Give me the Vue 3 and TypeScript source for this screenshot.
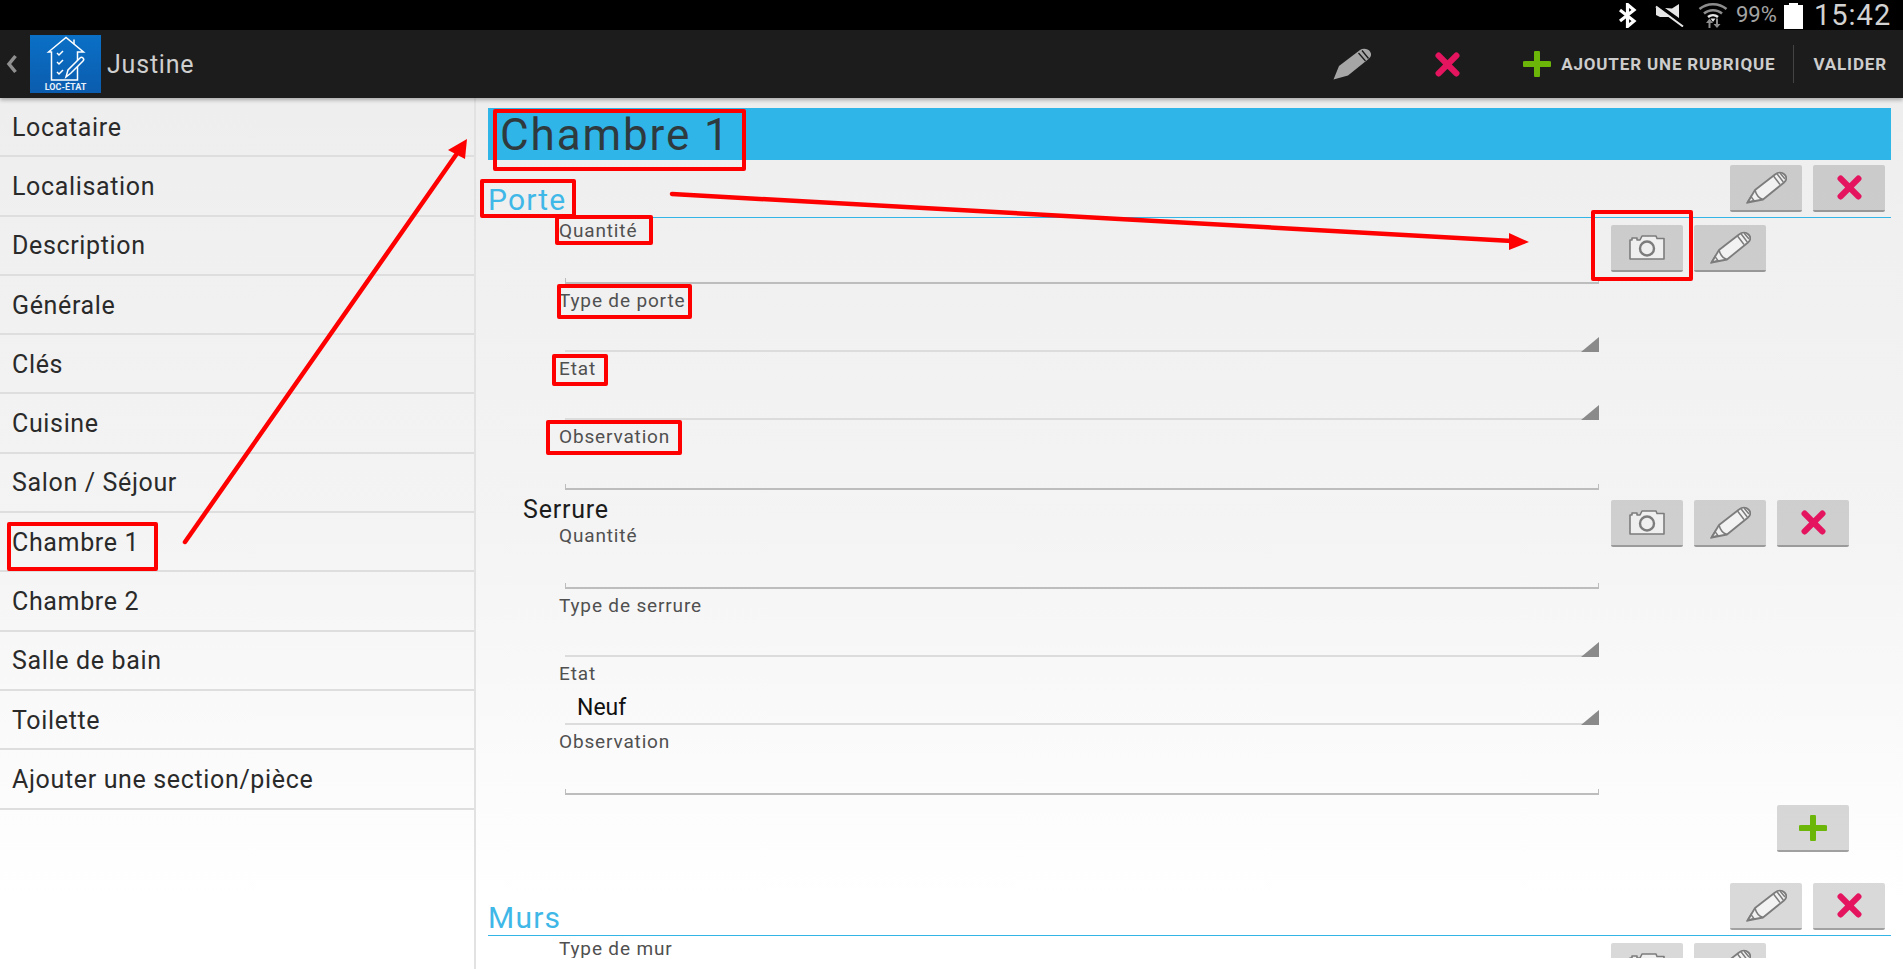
<script setup lang="ts">
type Field = { label: string; kind: 'text' | 'select'; value?: string }

const rooms = [
  'Locataire',
  'Localisation',
  'Description',
  'Générale',
  'Clés',
  'Cuisine',
  'Salon / Séjour',
  'Chambre 1',
  'Chambre 2',
  'Salle de bain',
  'Toilette',
  'Ajouter une section/pièce',
]

const porteFields: Field[] = [
  { label: 'Quantité', kind: 'text' },
  { label: 'Type de porte', kind: 'select' },
  { label: 'Etat', kind: 'select' },
  { label: 'Observation', kind: 'text' },
]

const serrureFields: Field[] = [
  { label: 'Quantité', kind: 'text' },
  { label: 'Type de serrure', kind: 'select' },
  { label: 'Etat', kind: 'select', value: 'Neuf' },
  { label: 'Observation', kind: 'text' },
]

// red annotation boxes drawn on top of the screenshot: x, y, w, h
const marks = [
  [9, 524, 147, 45],
  [495, 111, 249, 58],
  [482, 181, 92, 35],
  [557, 217, 94, 26],
  [559, 286, 131, 31],
  [554, 356, 52, 28],
  [548, 422, 132, 31],
  [1593, 212, 98, 67],
]
</script>

<template>
  <div class="screen">
    <svg class="sprites" width="0" height="0" aria-hidden="true">
      <symbol id="pencil-line" viewBox="0 0 41 33">
        <path d="M1.5 31.5 9 19 29 3.5C32 1 36 1 38.5 3.5S41 9 38 11.5L17 28.5Z" fill="#f2f2f2" stroke="#7c7c7c" stroke-width="1.8" stroke-linejoin="round" />
        <path d="M1.5 31.5 5 25.5 8 29.5ZM9 19C10 23 12 27 17 28.5M27.5 5 34 13.5M31 2.7 37.3 11M34 2 39 8" fill="none" stroke="#7c7c7c" stroke-width="1.5" />
      </symbol>
      <symbol id="pencil-solid" viewBox="0 0 38 32">
        <path d="M0.5 31.5 6 18 27 2C30 0 35 0.500 37 3.500S38 9 35.500 11L15 27.500Z" fill="#a6a6a6" />
        <path d="M25.500 5 32.500 13M29 2.500 35.500 10.500" fill="none" stroke="#1c1c1c" stroke-width="1.300" />
      </symbol>
      <symbol id="cross" viewBox="0 0 24 24">
        <path d="M3.500 3.500 20.500 20.500M20.500 3.500 3.500 20.500" stroke="#e5145f" stroke-width="6" stroke-linecap="round" fill="none" />
      </symbol>
      <symbol id="plus" viewBox="0 0 28 26">
        <path d="M14 2V24M2 13H26" stroke="#6cb60a" stroke-width="6" stroke-linecap="round" fill="none" />
      </symbol>
      <symbol id="camera" viewBox="0 0 36 25">
        <path d="M1 24V5H3V3H8V5H11L13 1H27L28 3.500H35V24Z" fill="#efefef" stroke="#7c7c7c" stroke-width="1.600" stroke-linejoin="round" />
        <circle cx="18" cy="13.500" r="7" fill="#efefef" stroke="#7c7c7c" stroke-width="2.400" />
      </symbol>
    </svg>

    <div class="status-bar">
      <svg class="status-bar__bt" width="20" height="25" viewBox="0 0 20 25">
        <path d="M2 7 16 18 9.500 23.500V1.500L16 7 2 18" fill="none" stroke="#fff" stroke-width="3.200" />
      </svg>
      <svg class="status-bar__mute" width="30" height="24" viewBox="0 0 30 24">
        <path d="M24 1V15L10 5 17 5.500Z" fill="#e6e6e6" />
        <path d="M1 5H6L18 13.500 24 18V20L14 14 5 14 1 12Z" fill="#e6e6e6" />
        <path d="M1 1 29 22" stroke="#000" stroke-width="3" />
        <path d="M1 3.500 28 23.500" stroke="#e6e6e6" stroke-width="2" />
      </svg>
      <svg class="status-bar__wifi" width="30" height="26" viewBox="0 0 30 26">
        <path d="M1.500 7C9 .5 21 .5 28.500 7M6 11.500C11 7 19 7 24 11.500" fill="none" stroke="#8c8c8c" stroke-width="2.500" />
        <path d="M10 15C13 12.500 17 12.500 20 15" fill="none" stroke="#e6e6e6" stroke-width="2.500" />
        <path d="M15 20 12.500 16.500H17.500Z" fill="#e6e6e6" />
        <path d="M9.500 26V21H7L10.500 16.500 14 21H11.500V26ZM19 16.500V22H21.500L18 26 14.500 22H17V16.500Z" fill="#8c8c8c" transform="translate(1 0)" />
      </svg>
      <span class="status-bar__battery-text">99%</span>
      <span class="status-bar__battery"></span>
      <span class="status-bar__clock">15:42</span>
    </div>

    <header class="app-bar">
      <svg class="app-bar__back" width="12" height="20" viewBox="0 0 12 20">
        <path d="M9.500 2 3 10 9.500 18" fill="none" stroke="#8f8f8f" stroke-width="3.500" />
      </svg>
      <div class="logo">
        <svg width="71" height="46" viewBox="0 0 71 46">
          <g fill="none" stroke="#fff" stroke-width="1.500">
            <path d="M18.500 17 36 2.500 53.500 17H47.500V45H21.500V17Z" />
            <path d="M44 9V4.500" />
            <path d="M27 18 29 20 33 16M27 27 29 29 33 25M27 37 29 39 33 35" />
            <path d="M36 42 38 35 50 23C52 21 55 24 53 26L41 38Z" fill="#0b66bb" />
          </g>
        </svg>
        <span class="logo__text">LOC-ÉTAT</span>
      </div>
      <span class="app-bar__title">Justine</span>
      <div class="app-bar__actions">
        <svg class="app-bar__pencil" width="38" height="32"><use href="#pencil-solid" /></svg>
        <svg class="app-bar__cross" width="25" height="25"><use href="#cross" /></svg>
        <svg class="app-bar__plus" width="28" height="26"><use href="#plus" /></svg>
        <span class="app-bar__label">AJOUTER UNE RUBRIQUE</span>
        <span class="app-bar__divider"></span>
        <span class="app-bar__label">VALIDER</span>
      </div>
    </header>

    <div class="content">
      <nav class="rooms">
        <div v-for="room in rooms" :key="room" class="rooms__item">{{ room }}</div>
      </nav>

      <main class="detail">
        <div class="detail__scroll">
          <h1 class="detail__title">Chambre 1</h1>

          <div class="section-head">
            <span class="section-head__name">Porte</span>
            <button type="button" class="icon-btn"><svg width="41" height="33"><use href="#pencil-line" /></svg></button>
            <button type="button" class="icon-btn"><svg width="25" height="25"><use href="#cross" /></svg></button>
          </div>

          <div class="group">
            <div class="fields">
              <div v-for="f in porteFields" :key="f.label" class="field" :class="`field--${f.kind}`">
                <label class="field__label">{{ f.label }}</label>
                <div class="field__input">{{ f.value }}</div>
              </div>
            </div>
            <div class="group__actions">
              <button type="button" class="icon-btn"><svg width="36" height="25"><use href="#camera" /></svg></button>
              <button type="button" class="icon-btn"><svg width="41" height="33"><use href="#pencil-line" /></svg></button>
            </div>
          </div>

          <div class="group group--sub">
            <div class="group__body">
              <div class="group__name">Serrure</div>
              <div class="fields">
                <div v-for="f in serrureFields" :key="f.label" class="field" :class="`field--${f.kind}`">
                  <label class="field__label">{{ f.label }}</label>
                  <div class="field__input">{{ f.value }}</div>
                </div>
              </div>
            </div>
            <div class="group__actions group__actions--sub">
              <button type="button" class="icon-btn"><svg width="36" height="25"><use href="#camera" /></svg></button>
              <button type="button" class="icon-btn"><svg width="41" height="33"><use href="#pencil-line" /></svg></button>
              <button type="button" class="icon-btn"><svg width="25" height="25"><use href="#cross" /></svg></button>
            </div>
          </div>

          <div class="add-row">
            <button type="button" class="icon-btn"><svg width="28" height="26"><use href="#plus" /></svg></button>
          </div>

          <div class="section-head section-head--next">
            <span class="section-head__name">Murs</span>
            <button type="button" class="icon-btn"><svg width="41" height="33"><use href="#pencil-line" /></svg></button>
            <button type="button" class="icon-btn"><svg width="25" height="25"><use href="#cross" /></svg></button>
          </div>

          <div class="group">
            <div class="fields">
              <div class="field field--text">
                <label class="field__label">Type de mur</label>
                <div class="field__input"></div>
              </div>
            </div>
            <div class="group__actions">
              <button type="button" class="icon-btn"><svg width="36" height="25"><use href="#camera" /></svg></button>
              <button type="button" class="icon-btn"><svg width="41" height="33"><use href="#pencil-line" /></svg></button>
            </div>
          </div>
        </div>
      </main>
    </div>

    <svg class="annotations" width="1903" height="969" viewBox="0 0 1903 969">
      <rect
        v-for="(m, i) in marks"
        :key="i"
        :x="m[0]"
        :y="m[1]"
        :width="m[2]"
        :height="m[3]"
        fill="none"
        stroke="#f00"
        stroke-width="4"
        stroke-linejoin="round"
      />
      <path d="M185 542 458 152" stroke="#f00" stroke-width="4.500" stroke-linecap="round" />
      <path d="M467 139 448 150 465 159Z" fill="#f00" />
      <path d="M672 194 1512 241" stroke="#f00" stroke-width="4.500" stroke-linecap="round" />
      <path d="M1529 242 1509 233 1509 250Z" fill="#f00" />
    </svg>
  </div>
</template>

<style>
html,
body {
  margin: 0;
  background: #fff;
}
</style>

<style scoped>
.screen {
  position: relative;
  display: flex;
  flex-direction: column;
  width: 1903px;
  height: 969px;
  overflow: hidden;
  font-family: Roboto, sans-serif;
}

.sprites {
  position: absolute;
}

.status-bar {
  display: flex;
  align-items: center;
  height: 30px;
  flex: none;
  padding-left: 1618px;
  background: #000;
  box-sizing: border-box;
  line-height: 30px;
}

.status-bar__mute {
  margin-left: 17px;
}

.status-bar__wifi {
  margin-left: 13px;
}

.status-bar__battery-text {
  margin-left: 8px;
  width: 46px;
  color: #a3a3a3;
  font-size: 22px;
}

.status-bar__battery {
  position: relative;
  width: 19px;
  height: 24px;
  margin: 3px 0 0 2px;
  background: #fff;
}

.status-bar__battery::before {
  content: '';
  position: absolute;
  top: -2px;
  left: 5px;
  width: 9px;
  height: 2px;
  background: #fff;
}

.status-bar__clock {
  margin-left: 11px;
  color: #d2d2d2;
  font-size: 29px;
  letter-spacing: 1px;
}

.app-bar {
  position: relative;
  z-index: 1;
  display: flex;
  align-items: center;
  height: 68px;
  flex: none;
  padding-left: 6px;
  background: #1c1c1c;
  box-shadow: 0 2px 4px rgba(0, 0, 0, 0.3);
}

.logo {
  position: relative;
  display: flex;
  flex-direction: column;
  align-items: center;
  width: 71px;
  height: 58px;
  margin-left: 12px;
  background: linear-gradient(#0a70c6, #0b5cae);
}

.logo svg {
  display: block;
}

.logo__text {
  color: #e8f1fa;
  font-size: 9px;
  font-weight: 700;
  line-height: 12px;
}

.app-bar__title {
  margin-left: 6px;
  color: #cfcfcf;
  font-size: 25px;
  letter-spacing: 0.8px;
}

.app-bar__actions {
  display: flex;
  align-items: center;
  margin-left: auto;
  padding-right: 16px;
}

.app-bar__cross {
  margin-left: 64px;
}

.app-bar__plus {
  margin: 0 10px 0 63px;
}

.app-bar__label {
  color: #cdcdcd;
  font-size: 17px;
  font-weight: 700;
  letter-spacing: 0.85px;
  white-space: nowrap;
}

.app-bar__divider {
  width: 1px;
  height: 38px;
  margin: 0 19px 0 18px;
  background: #444;
}

.content {
  display: flex;
  flex: 1;
  min-height: 0;
  background: linear-gradient(#eeeeee, #f4f4f4 50%, #ffffff 92%);
}

.rooms {
  width: 476px;
  flex: none;
  border-right: 2px solid #e2e2e2;
  box-sizing: border-box;
}

.rooms__item {
  display: flex;
  align-items: center;
  height: 59.3px;
  padding: 1px 0 0 12px;
  border-bottom: 2px solid #dedede;
  box-sizing: border-box;
  color: #2a2a2a;
  font-size: 25px;
  letter-spacing: 0.65px;
}

.detail {
  flex: 1;
  min-width: 0;
  padding-bottom: 11px;
  box-sizing: border-box;
  display: flex;
}

.detail__scroll {
  flex: 1;
  min-width: 0;
  overflow: hidden;
  padding: 10px 12px 0 12px;
}

.detail__title {
  height: 52px;
  margin: 0;
  padding-left: 12px;
  background: #30b5e8;
  color: #2f3a3f;
  font-size: 44px;
  font-weight: 400;
  letter-spacing: 1.9px;
  line-height: 55px;
}

.section-head {
  display: flex;
  align-items: flex-start;
  justify-content: flex-end;
  gap: 11px;
  position: relative;
  height: 58px;
  padding: 5px 6px 0 0;
  border-bottom: 1px solid #33b5e5;
  box-sizing: border-box;
}

.section-head--next {
  margin-top: 26px;
}

.section-head__name {
  position: absolute;
  left: 0;
  bottom: -1px;
  color: #3fb8e8;
  font-size: 30px;
  letter-spacing: 1.2px;
  line-height: 36px;
}

.icon-btn {
  display: flex;
  align-items: center;
  justify-content: center;
  width: 72px;
  height: 47px;
  flex: none;
  padding: 0;
  border: none;
  border-bottom: 2px solid rgba(0, 0, 0, 0.26);
  border-radius: 2px;
  background: rgba(0, 0, 0, 0.15);
}

.group {
  display: flex;
  align-items: flex-start;
  gap: 12px;
}

.group__body {
  width: 1076px;
  margin-left: 35px;
}

.group__name {
  height: 29px;
  padding-top: 8px;
  box-sizing: border-box;
  color: #1c1c1c;
  font-size: 25px;
  letter-spacing: 0.8px;
  line-height: 24px;
  white-space: nowrap;
}

.group__actions {
  display: flex;
  gap: 11px;
  padding-top: 7px;
}

.group__actions--sub {
  padding-top: 10px;
}

.fields {
  width: 1040px;
  margin: -4px 0 0 71px;
}

.group--sub .fields {
  margin: 0 0 0 36px;
}

.field {
  height: 68px;
  padding-top: 5px;
  box-sizing: border-box;
}

.field--text {
  height: 70px;
}

.field__label {
  display: block;
  color: #505050;
  font-size: 19px;
  font-weight: 400;
  letter-spacing: 0.85px;
  line-height: 24px;
}

.field__input {
  position: relative;
  height: 37px;
  margin-left: 6px;
  padding-left: 12px;
  box-sizing: border-box;
  color: #111;
  font-size: 23px;
  line-height: 44px;
}

.field--text .field__input {
  height: 41px;
  border-bottom: 2px solid #bdbdbd;
}

.field--text .field__input::before,
.field--text .field__input::after {
  content: '';
  position: absolute;
  bottom: 0;
  width: 1px;
  height: 4px;
  background: #bdbdbd;
}

.field--text .field__input::before {
  left: 0;
}

.field--text .field__input::after {
  right: 0;
}

.field--select .field__input {
  height: 39px;
  border-bottom: 2px solid #dcdcdc;
}

.field--select .field__input::after {
  content: '';
  position: absolute;
  right: 0;
  bottom: -2px;
  width: 0;
  height: 0;
  border-style: solid;
  border-width: 0 0 15px 18px;
  border-color: transparent transparent #8a8a8a transparent;
}

.add-row {
  display: flex;
  justify-content: flex-end;
  padding: 10px 42px 0 0;
}

.annotations {
  position: absolute;
  top: 0;
  left: 0;
  z-index: 2;
  pointer-events: none;
}
</style>
